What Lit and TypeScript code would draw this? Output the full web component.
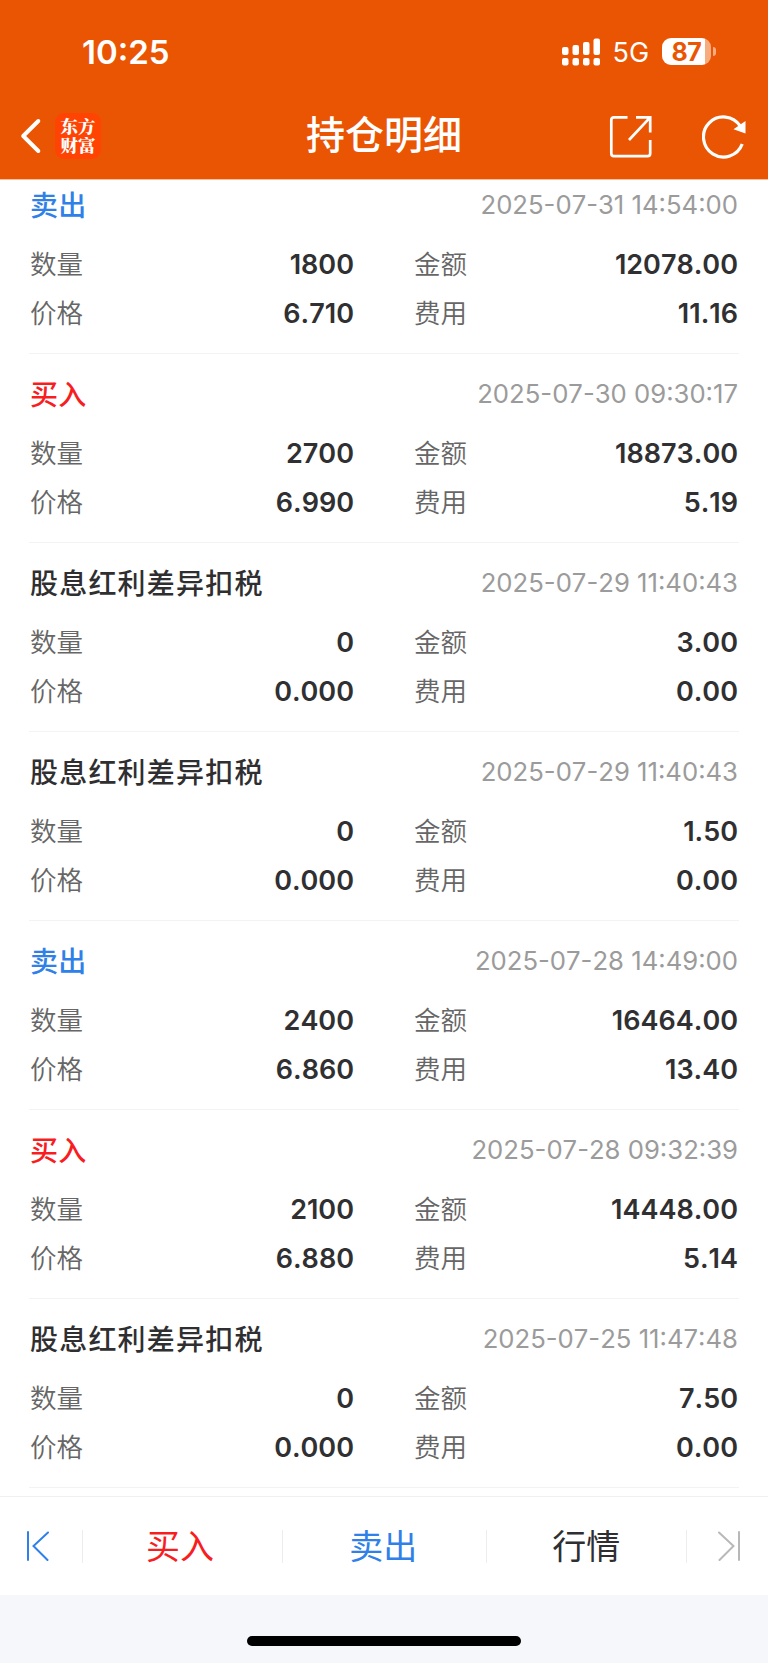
import { LitElement, html, css } from "lit";
import { customElement, property } from "lit/decorators.js";

interface Trade {
  kind: "sell" | "buy" | "tax";
  time: string;
  qty: string;
  amount: string;
  price: string;
  fee: string;
}

const NAMES = { sell: "卖出", buy: "买入", tax: "股息红利差异扣税" };

const TRADES: Trade[] = [
  { kind: "sell", time: "2025-07-31 14:54:00", qty: "1800", amount: "12078.00", price: "6.710", fee: "11.16" },
  { kind: "buy", time: "2025-07-30 09:30:17", qty: "2700", amount: "18873.00", price: "6.990", fee: "5.19" },
  { kind: "tax", time: "2025-07-29 11:40:43", qty: "0", amount: "3.00", price: "0.000", fee: "0.00" },
  { kind: "tax", time: "2025-07-29 11:40:43", qty: "0", amount: "1.50", price: "0.000", fee: "0.00" },
  { kind: "sell", time: "2025-07-28 14:49:00", qty: "2400", amount: "16464.00", price: "6.860", fee: "13.40" },
  { kind: "buy", time: "2025-07-28 09:32:39", qty: "2100", amount: "14448.00", price: "6.880", fee: "5.14" },
  { kind: "tax", time: "2025-07-25 11:47:48", qty: "0", amount: "7.50", price: "0.000", fee: "0.00" },
];

@customElement("status-bar")
export class StatusBar extends LitElement {
  static styles = css`
    :host { display: flex; height: 91px; padding: 12px 52px 0 82px; box-sizing: border-box; align-items: center; color: #fff; font-family: Inter, sans-serif; }
    .clock { flex: 1; font-size: 33px; font-weight: 600; letter-spacing: 0; line-height: 40px; }
    .signal { width: 40px; height: 28px; }
    .net { font-size: 27px; line-height: 40px; margin: 2px 0 0 12px; width: 49.5px; letter-spacing: 0.2px; }
    .cell { width: 49px; height: 27px; border-radius: 9px; background: linear-gradient(90deg, #fff 43px, #f7ac80 43px); color: #ea5504; font-size: 25px; font-weight: 700; line-height: 28px; text-align: center; letter-spacing: -0.3px; }
    .tip { width: 3px; height: 9px; margin-left: 2px; border-radius: 0 4px 4px 0; background: #f7ac80; }
  `;
  render() {
    return html`
      <span class="clock">10:25</span>
      <svg class="signal" viewBox="0 0 40 28" fill="#fff">
        <rect x="1" y="9" width="6.5" height="8" rx="2" /><rect x="11.5" y="7" width="6.5" height="10" rx="2" />
        <rect x="22" y="4" width="6.5" height="13" rx="2" /><rect x="32.5" y="0.5" width="6.5" height="16.5" rx="2" />
        <rect x="1" y="20" width="6.5" height="7.5" rx="2" /><rect x="11.5" y="20" width="6.5" height="7.5" rx="2" />
        <rect x="22" y="20" width="6.5" height="7.5" rx="2" /><rect x="32.5" y="20" width="6.5" height="7.5" rx="2" />
      </svg>
      <span class="net">5G</span>
      <span class="cell">87</span><span class="tip"></span>
    `;
  }
}

@customElement("nav-bar")
export class NavBar extends LitElement {
  static styles = css`
    :host { display: grid; grid-template-columns: 1fr auto 1fr; height: 88px; align-items: center; color: #fff; font-family: "Noto Sans CJK SC", sans-serif; }
    .left { display: flex; align-items: center; padding: 2px 0 0 20px; }
    .back { width: 22px; height: 36px; }
    .logo { display: grid; place-content: center; width: 46px; height: 46px; box-sizing: border-box; padding-bottom: 2px; margin-left: 13px; border-radius: 9px; background: #ff4302; font-family: "Noto Serif CJK SC", "Noto Sans CJK SC", serif; font-size: 17.5px; font-weight: 900; line-height: 19.5px; text-align: center; }
    .title { font-size: 39px; font-weight: 500; line-height: 56px; padding-bottom: 7px; }
    .right { display: flex; justify-content: flex-end; align-items: center; gap: 49px; padding: 4px 22px 0 0; }
    .right svg { width: 44px; height: 44px; }
  `;
  render() {
    return html`
      <div class="left">
        <svg class="back" viewBox="0 0 22 36" fill="none" stroke="#fff" stroke-width="4" stroke-linecap="round" stroke-linejoin="round"><path d="M18.3 3 L3.2 18 L18.3 33" /></svg>
        <div class="logo"><span>东方</span><span>财富</span></div>
      </div>
      <div class="title">持仓明细</div>
      <div class="right">
        <svg viewBox="0 0 44 44" fill="none" stroke="#fff" stroke-width="2.7">
          <path d="M18.5 2.3 H5 Q2.3 2.3 2.3 5 V38.5 Q2.3 41.2 5 41.2 H38.5 Q41.2 41.2 41.2 38.5 V25" />
          <path d="M27 2.3 H41.2 V17.5 M40.7 2.8 L20 25" />
        </svg>
        <svg viewBox="0 0 44 44" fill="none" stroke="#fff" stroke-width="3.2">
          <path d="M40.2 29 A20 20 0 1 1 38.2 11" />
          <path d="M43.5 6 V18.6 L31.5 14.2 Z" fill="#fff" stroke="none" />
        </svg>
      </div>
    `;
  }
}

@customElement("trade-record")
export class TradeRecord extends LitElement {
  @property({ attribute: false }) trade!: Trade;
  static styles = css`
    :host { display: block; box-sizing: border-box; height: 189px; padding: 20px 1px 0; border-bottom: 1px solid #f3f3f4; font-family: Inter, "Noto Sans CJK SC", sans-serif; font-kerning: none; }
    .head { display: flex; justify-content: space-between; align-items: center; height: 40px; margin-bottom: 14px; }
    .name { font-family: "Noto Sans CJK SC", sans-serif; font-size: 28px; letter-spacing: 1.2px; font-weight: 500; line-height: 40px; padding-bottom: 3px; color: #2f2f31; }
    .sell { color: #2f80e8; letter-spacing: 0.3px; }
    .buy { color: #f81d1f; letter-spacing: 0.3px; }
    .time { font-size: 25.7px; line-height: 40px; color: #9b9b9b; }
    .grid { display: grid; grid-template-columns: 324px 324px; column-gap: 60px; grid-auto-rows: 49.3px; }
    .field { display: flex; justify-content: space-between; align-items: center; }
    .label { font-family: "Noto Sans CJK SC", sans-serif; font-size: 26.5px; font-weight: 350; line-height: 40px; padding-bottom: 2px; color: #666; }
    .value { font-size: 27px; font-weight: 600; line-height: 40px; padding-top: 2px; color: #303032; }
  `;
  private field(label: string, value: string) {
    return html`<div class="field"><span class="label">${label}</span><span class="value">${value}</span></div>`;
  }
  render() {
    const t = this.trade;
    return html`
      <div class="head"><span class="name ${t.kind}">${NAMES[t.kind]}</span><span class="time">${t.time}</span></div>
      <div class="grid">
        ${this.field("数量", t.qty)}${this.field("金额", t.amount)}
        ${this.field("价格", t.price)}${this.field("费用", t.fee)}
      </div>
    `;
  }
}

@customElement("action-bar")
export class ActionBar extends LitElement {
  static styles = css`
    :host { display: grid; grid-template-columns: 83px 200px 203.5px 200.5px 1fr; align-items: center; height: 99px; box-sizing: border-box; border-top: 1px solid #f0f0f1; background: #fff; font-family: "Noto Sans CJK SC", sans-serif; }
    .item { display: flex; align-items: center; justify-content: center; height: 33px; border-right: 1px solid #ededee; font-size: 34px; line-height: 40px; color: #2f2f31; }
    .item span { padding-bottom: 3px; }
    .last { border: 0; }
    .buy { color: #f81d1f; padding-right: 5px; }
    .sell { color: #2f80e8; padding-right: 2px; }
    svg { width: 24px; height: 30px; fill: none; stroke-width: 2; stroke-linecap: round; }
    .prev { stroke: #2f80e8; margin-right: 6px; }
    .next { stroke: #b8b8b8; margin-left: 2px; }
  `;
  render() {
    return html`
      <div class="item"><svg class="prev" viewBox="0 0 24 30"><path d="M2 1 V29 M22 1.5 L7.5 15 L21.5 29" /></svg></div>
      <div class="item buy"><span>买入</span></div>
      <div class="item sell"><span>卖出</span></div>
      <div class="item"><span>行情</span></div>
      <div class="item last"><svg class="next" viewBox="0 0 24 30"><path d="M22 1 V29 M2 1.5 L16.5 15 L2.5 29" /></svg></div>
    `;
  }
}

@customElement("app-root")
export class AppRoot extends LitElement {
  static styles = css`
    :host { display: flex; flex-direction: column; width: 768px; height: 1663px; overflow: hidden; background: #fff; }
    .top { flex: none; height: 179px; background: #ea5504; border-bottom: 1px solid #f9bd98; }
    .list { flex: 1; min-height: 0; overflow: hidden; padding: 0 29px; }
    .scrolled { margin-top: -15px; }
    .home { flex: none; display: flex; justify-content: center; height: 68px; box-sizing: border-box; padding-top: 41px; background: #f5f7fa; }
    .pill { width: 274px; height: 10px; border-radius: 5px; background: #000; }
  `;
  render() {
    return html`
      <div class="top"><status-bar></status-bar><nav-bar></nav-bar></div>
      <div class="list"><div class="scrolled">${TRADES.map((t) => html`<trade-record .trade=${t}></trade-record>`)}</div></div>
      <action-bar></action-bar>
      <div class="home"><div class="pill"></div></div>
    `;
  }
}
